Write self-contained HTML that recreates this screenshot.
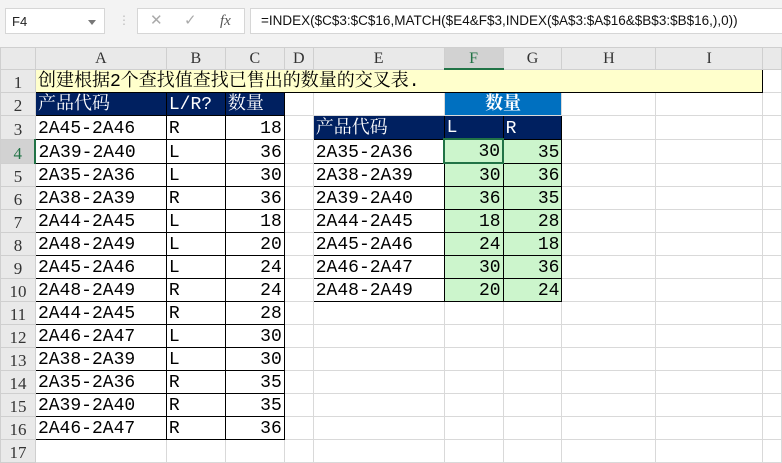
<!DOCTYPE html>
<html><head><meta charset="utf-8"><style>
body{margin:0;width:782px;height:453px;overflow:hidden;background:#fff;font-family:"Liberation Mono","Noto Serif CJK SC",monospace;position:relative}
.top{position:absolute;left:0;top:0;width:782px;height:48px;background:#f3f3f3}
.nb{position:absolute;left:5px;top:8px;width:100px;height:26px;background:#fff;border:1px solid #d6d6d6;font:13px "Liberation Sans",sans-serif;line-height:26px;box-sizing:border-box;padding-left:6px;color:#222}
.nb:after{content:"";position:absolute;right:8px;top:11px;border:4px solid transparent;border-top:5px solid #777}
.ic{position:absolute;left:137px;top:8px;width:108px;height:26px;background:#fff;border:1px solid #d6d6d6;box-sizing:border-box;color:#aaa;font:15px "Liberation Sans",sans-serif;line-height:24px}
.fb{position:absolute;left:250px;top:8px;width:540px;height:26px;background:#fff;border:1px solid #d6d6d6;box-sizing:border-box;font:13.5px "Liberation Sans",sans-serif;line-height:24px;padding-left:10px;color:#111}
table{position:absolute;left:0;top:47px;border-collapse:collapse;table-layout:fixed}
td{height:22px;padding:0 2px;font-size:18px;line-height:19px;border:1px solid #d9d9d9;white-space:nowrap;overflow:hidden;color:#000;vertical-align:bottom}
tr.h td{height:20px;background:#e9e9e9;text-align:center;font-size:16px;color:#333;border-color:#cfcfcf;font-family:"Liberation Serif",serif;vertical-align:middle}
td.r{background:#e9e9e9;text-align:center;font-size:17px;color:#333;border-color:#cfcfcf;padding:0;font-family:"Liberation Serif",serif}
.k{border:1px solid #000}
.n{background:#002060;color:#fff}
.b{background:#0070c0;color:#fff;text-align:center;font-weight:bold}
.g{background:#ccf5cc;text-align:right;border:1px solid #000}
.num{text-align:right}
.y{background:#ffffcc;border:1px solid #000}
</style></head><body>
<div class="top"></div>
<div class="nb">F4</div>
<div style="position:absolute;left:118px;top:13px;color:#bbb;font:12px sans-serif">⋮</div>
<div class="ic"><span style="position:absolute;left:12px">✕</span><span style="position:absolute;left:46px">✓</span><span style="position:absolute;left:82px;color:#555;font-style:italic;font-family:'Liberation Serif',serif">fx</span></div>
<div class="fb">=INDEX($C$3:$C$16,MATCH($E4&amp;F$3,INDEX($A$3:$A$16&amp;$B$3:$B$16,),0))</div>
<table>
<colgroup><col style="width:35px"><col style="width:131px"><col style="width:59px"><col style="width:59px"><col style="width:29px"><col style="width:131px"><col style="width:59px"><col style="width:59px"><col style="width:94px"><col style="width:107px"><col style="width:19px"></colgroup>
<tr class="h"><td></td><td>A</td><td>B</td><td>C</td><td>D</td><td>E</td><td style="background:#d2d2d2;border-bottom:2px solid #217346;color:#217346">F</td><td>G</td><td>H</td><td>I</td><td></td></tr>
<tr><td class="r">1</td><td class="y" colspan="9">创建根据2个查找值查找已售出的数量的交叉表.</td><td></td></tr>
<tr><td class="r">2</td><td class="n k">产品代码</td><td class="n k">L/R?</td><td class="n k">数量</td><td></td><td></td><td class="b" colspan="2">数量</td><td></td><td></td><td></td></tr>
<tr><td class="r">3</td><td class="k">2A45-2A46</td><td class="k">R</td><td class="k num">18</td><td></td><td class="n k">产品代码</td><td class="n k">L</td><td class="n k">R</td><td></td><td></td><td></td></tr>
<tr><td class="r" style="background:#d2d2d2;color:#217346;border-right:2px solid #217346">4</td><td class="k">2A39-2A40</td><td class="k">L</td><td class="k num">36</td><td></td><td class="k">2A35-2A36</td><td class="g" style="border:2px solid #217346">30</td><td class="g">35</td><td></td><td></td><td></td></tr>
<tr><td class="r">5</td><td class="k">2A35-2A36</td><td class="k">L</td><td class="k num">30</td><td></td><td class="k">2A38-2A39</td><td class="g">30</td><td class="g">36</td><td></td><td></td><td></td></tr>
<tr><td class="r">6</td><td class="k">2A38-2A39</td><td class="k">R</td><td class="k num">36</td><td></td><td class="k">2A39-2A40</td><td class="g">36</td><td class="g">35</td><td></td><td></td><td></td></tr>
<tr><td class="r">7</td><td class="k">2A44-2A45</td><td class="k">L</td><td class="k num">18</td><td></td><td class="k">2A44-2A45</td><td class="g">18</td><td class="g">28</td><td></td><td></td><td></td></tr>
<tr><td class="r">8</td><td class="k">2A48-2A49</td><td class="k">L</td><td class="k num">20</td><td></td><td class="k">2A45-2A46</td><td class="g">24</td><td class="g">18</td><td></td><td></td><td></td></tr>
<tr><td class="r">9</td><td class="k">2A45-2A46</td><td class="k">L</td><td class="k num">24</td><td></td><td class="k">2A46-2A47</td><td class="g">30</td><td class="g">36</td><td></td><td></td><td></td></tr>
<tr><td class="r">10</td><td class="k">2A48-2A49</td><td class="k">R</td><td class="k num">24</td><td></td><td class="k">2A48-2A49</td><td class="g">20</td><td class="g">24</td><td></td><td></td><td></td></tr>
<tr><td class="r">11</td><td class="k">2A44-2A45</td><td class="k">R</td><td class="k num">28</td><td></td><td></td><td></td><td></td><td></td><td></td><td></td></tr>
<tr><td class="r">12</td><td class="k">2A46-2A47</td><td class="k">L</td><td class="k num">30</td><td></td><td></td><td></td><td></td><td></td><td></td><td></td></tr>
<tr><td class="r">13</td><td class="k">2A38-2A39</td><td class="k">L</td><td class="k num">30</td><td></td><td></td><td></td><td></td><td></td><td></td><td></td></tr>
<tr><td class="r">14</td><td class="k">2A35-2A36</td><td class="k">R</td><td class="k num">35</td><td></td><td></td><td></td><td></td><td></td><td></td><td></td></tr>
<tr><td class="r">15</td><td class="k">2A39-2A40</td><td class="k">R</td><td class="k num">35</td><td></td><td></td><td></td><td></td><td></td><td></td><td></td></tr>
<tr><td class="r">16</td><td class="k">2A46-2A47</td><td class="k">R</td><td class="k num">36</td><td></td><td></td><td></td><td></td><td></td><td></td><td></td></tr>
<tr><td class="r">17</td><td></td><td></td><td></td><td></td><td></td><td></td><td></td><td></td><td></td><td></td></tr>
</table>
</body></html>
